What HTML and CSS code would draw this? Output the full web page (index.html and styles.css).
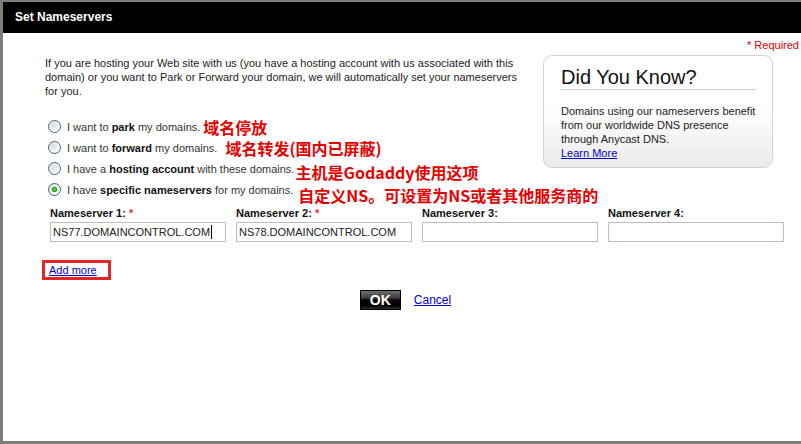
FILE: index.html
```html
<!DOCTYPE html>
<html lang="en">
<head>
    <meta charset="UTF-8">
    <title>Set Nameservers</title>
    <link rel="stylesheet" href="styles.css">
</head>
<body>
    <div class="dialog">
        <div class="titlebar">Set Nameservers</div>

        <div class="content">
            <div class="required">* Required</div>

            <div class="tip">
                <div class="tip-title">Did You Know?</div>
                <p class="tip-text">Domains using our nameservers benefit from our worldwide DNS presence through Anycast DNS.<br><a href="#">Learn More</a></p>
            </div>

            <p class="intro">If you are hosting your Web site with us (you have a hosting account with us associated with this domain) or you want to Park or Forward your domain, we will automatically set your nameservers for you.</p>

            <div class="options">
                <label class="option">
                    <input type="radio" name="ns">
                    <span>I want to <b>park</b> my domains.</span>
                    <span class="note first">域名停放</span>
                </label>
                <label class="option">
                    <input type="radio" name="ns">
                    <span>I want to <b>forward</b> my domains.</span>
                    <span class="note wide">域名转发(国内已屏蔽)</span>
                </label>
                <label class="option">
                    <input type="radio" name="ns">
                    <span>I have a <b>hosting account</b> with these domains.</span>
                    <span class="note tight low">主机是Godaddy使用这项</span>
                </label>
                <label class="option">
                    <input type="radio" name="ns" checked>
                    <span>I have <b>specific nameservers</b> for my domains.</span>
                    <span class="note lower">自定义NS。可设置为NS或者其他服务商的</span>
                </label>
            </div>

            <div class="ns-grid">
                <div class="ns-field">
                    <div class="ns-label">Nameserver 1: <span class="star">*</span></div>
                    <div class="textbox">NS77.DOMAINCONTROL.COM<span class="caret"></span></div>
                </div>
                <div class="ns-field">
                    <div class="ns-label">Nameserver 2: <span class="star">*</span></div>
                    <div class="textbox">NS78.DOMAINCONTROL.COM</div>
                </div>
                <div class="ns-field">
                    <div class="ns-label">Nameserver 3:</div>
                    <div class="textbox"></div>
                </div>
                <div class="ns-field">
                    <div class="ns-label">Nameserver 4:</div>
                    <div class="textbox"></div>
                </div>
            </div>

            <div class="add-more"><a href="#">Add more</a></div>

            <div class="actions">
                <button class="ok-btn">OK</button>
                <a href="#" class="cancel">Cancel</a>
            </div>
        </div>
    </div>
</body>
</html>
```

FILE: styles.css
```css
body {
    margin: 0;
    background-color: #7d7d77;
    font-family: "Liberation Sans", Arial, sans-serif;
    font-size: 11px;
    color: #222;
}
a {
    color: #0000cc;
}
.dialog {
    margin: 2px 0 0 3px;
    height: 439px;
    background-color: #fff;
    overflow: hidden;
}
.titlebar {
    height: 31px;
    line-height: 31px;
    padding-left: 12px;
    background-color: #000;
    color: #fff;
    font-size: 12px;
    font-weight: bold;
}
.content {
    padding: 5px 2px 0 42px;
}
.required {
    text-align: right;
    color: #d40000;
    line-height: 14px;
}
.tip {
    float: right;
    width: 195px;
    margin: 3px 26px 0 20px;
    padding: 10px 16px 7px 17px;
    border: 1px solid #d2d2d2;
    border-radius: 9px;
    background: linear-gradient(#fff 45%, #ebebeb);
}
.tip-title {
    font-size: 20px;
    line-height: 23px;
    color: #111;
    border-bottom: 1px solid #cfcfcf;
}
.tip-text {
    margin: 14px 0 0;
    line-height: 14px;
}
.intro {
    margin: 4px 0 0;
    line-height: 14px;
}
.options {
    margin-top: 18px;
}
.option {
    display: flex;
    align-items: center;
    height: 21px;
    white-space: nowrap;
    color: #333;
}
.option b {
    color: #111;
}
.option input {
    appearance: none;
    -webkit-appearance: none;
    width: 13px;
    height: 13px;
    margin: 0 6px 0 3px;
    border: 1px solid #3b6185;
    border-radius: 50%;
    background: radial-gradient(circle at 35% 35%, #dcdcd6, #fff 75%);
    flex-shrink: 0;
}
.option input:checked {
    background: radial-gradient(circle, #5fdc4f 0, #22a318 2.5px, transparent 3px),
                radial-gradient(circle at 35% 35%, #dcdcd6, #fff 75%);
}
.note {
    margin-left: 5px;
    font-family: "Noto Sans CJK SC", sans-serif;
    font-size: 16px;
    font-weight: bold;
    line-height: 16px;
    color: #e60000;
}
.note.first {
    margin-left: 3px;
}
.note.wide {
    margin-left: 8px;
}
.note.tight {
    margin-left: 1px;
}
.note.low {
    margin-top: 6px;
}
.note.lower {
    margin-top: 10px;
}
.ns-grid {
    display: grid;
    grid-template-columns: repeat(4, 176px);
    column-gap: 10px;
    margin-top: 6px;
    padding-left: 5px;
}
.ns-label {
    font-weight: bold;
    line-height: 14px;
    color: #111;
}
.star {
    color: #e03030;
}
.textbox {
    box-sizing: border-box;
    height: 20px;
    margin-top: 2px;
    padding: 0 2px;
    line-height: 18px;
    border: 1px solid #bebeb6;
    color: #222;
}
.caret {
    display: inline-block;
    width: 1px;
    height: 14px;
    margin-left: 1px;
    vertical-align: -3px;
    background-color: #000;
}
.add-more {
    display: inline-block;
    margin: 18px 0 0 -3px;
    padding: 0 11px 0 4px;
    line-height: 14px;
    border: 3px solid #e42525;
}
.actions {
    display: flex;
    justify-content: center;
    align-items: center;
    gap: 13px;
    margin-top: 10px;
    padding-right: 33px;
}
.ok-btn {
    width: 41px;
    height: 20px;
    padding: 0;
    border: 1px solid #000;
    background: linear-gradient(#6e6e6e 0, #3a3a3a 40%, #050505 50%, #000 80%, #2c2c2c 100%);
    color: #fff;
    font-family: "Liberation Sans", Arial, sans-serif;
    font-size: 14px;
    font-weight: bold;
    cursor: pointer;
}
.cancel {
    font-size: 12px;
}
```
